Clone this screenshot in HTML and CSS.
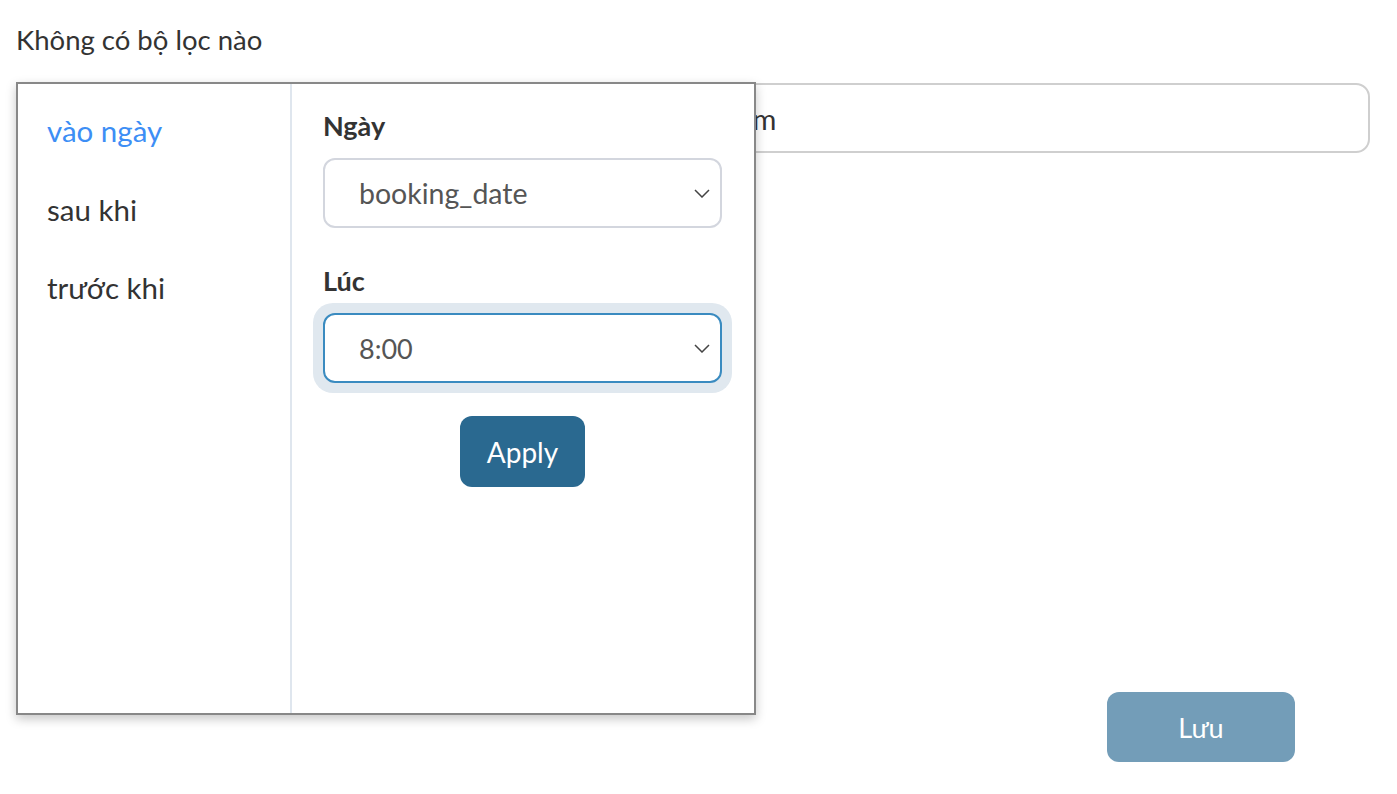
FILE: index.html
```html
<!DOCTYPE html>
<html lang="vi">
<head>
<meta charset="utf-8">
<title>Bộ lọc</title>
<link rel="stylesheet" href="styles.css">
</head>
<body>
<div class="page">
  <div class="title">Không có bộ lọc nào</div>
  <div class="name-field">Tìm kiếm theo tên đặt phòng sớm</div>
  <div class="footer">
    <button class="save-btn">Lưu</button>
  </div>

  <div class="popup">
    <ul class="menu">
      <li class="menu-item active">vào ngày</li>
      <li class="menu-item">sau khi</li>
      <li class="menu-item">trước khi</li>
    </ul>
    <div class="panel">
      <div class="field-label">Ngày</div>
      <div class="select">
        <span>booking_date</span>
        <svg class="chev" width="16" height="9" viewBox="0 0 16 9"><path d="M1 1l7 7 7-7" fill="none" stroke="#444" stroke-width="1.5"/></svg>
      </div>
      <div class="field-label second">Lúc</div>
      <div class="focus-ring">
        <div class="select focused">
          <span>8:00</span>
          <svg class="chev" width="16" height="9" viewBox="0 0 16 9"><path d="M1 1l7 7 7-7" fill="none" stroke="#444" stroke-width="1.5"/></svg>
        </div>
      </div>
      <div class="apply-row"><button class="apply-btn">Apply</button></div>
    </div>
  </div>
</div>
</body>
</html>
```
FILE: styles.css
```css
html, body {
  margin: 0;
  padding: 0;
  background: #fff;
}
body {
  font-family: "Lato", "Noto Sans", sans-serif;
  color: #333;
}
.page {
  position: relative;
  padding: 22px 27px 0 16px;
}
.title {
  font-size: 27.5px;
  line-height: 36px;
  color: #333;
}
.name-field {
  margin-top: 25px;
  height: 66px;
  border: 2px solid #cfcfcf;
  border-radius: 14px;
  display: flex;
  align-items: center;
  padding-left: 329px;
  font-size: 29px;
  color: #333;
  white-space: nowrap;
  overflow: hidden;
}
.footer {
  display: flex;
  justify-content: flex-end;
  padding-right: 75px;
  margin-top: 539px;
}
.save-btn {
  width: 188px;
  height: 70px;
  border: none;
  border-radius: 12px;
  background: #739db8;
  color: #fff;
  font-family: inherit;
  font-size: 27px;
}
.popup {
  position: absolute;
  left: 16px;
  top: 82px;
  width: 736px;
  height: 629px;
  border: 2px solid #888;
  background: #fff;
  box-shadow: 0 4px 10px rgba(0,0,0,0.22);
  display: grid;
  grid-template-columns: 274px 1fr;
}
.menu {
  list-style: none;
  margin: 0;
  padding: 27px 0 0 29px;
  border-right: 2px solid #dfe6ee;
}
.menu-item {
  font-size: 29.5px;
  line-height: 40px;
  margin-bottom: 38.5px;
  color: #333;
}
.menu-item.active {
  color: #3d8ef5;
}
.panel {
  padding: 24px 32px 0 31px;
}
.field-label {
  font-weight: 700;
  font-size: 27px;
  line-height: 36px;
  color: #333;
  margin-bottom: 14px;
}
.field-label.second {
  margin-top: 35px;
  margin-bottom: 4px;
}
.select {
  height: 66px;
  border: 2px solid #d3d6de;
  border-radius: 12px;
  display: flex;
  align-items: center;
  justify-content: space-between;
  padding: 0 10px 0 34px;
  font-size: 28.5px;
  color: #555;
}
.focus-ring {
  margin: 0 -10px;
  padding: 10px;
  border-radius: 20px;
  background: #e0e8ef;
}
.select.focused {
  border-color: #3a8bc0;
  background: #fff;
  font-size: 27px;
}
.chev {
  display: block;
}
.apply-row {
  display: flex;
  justify-content: center;
  margin-top: 23px;
}
.apply-btn {
  width: 125px;
  height: 71px;
  border: none;
  border-radius: 12px;
  background: #2a6990;
  color: #fff;
  font-family: inherit;
  font-size: 28px;
}
```
